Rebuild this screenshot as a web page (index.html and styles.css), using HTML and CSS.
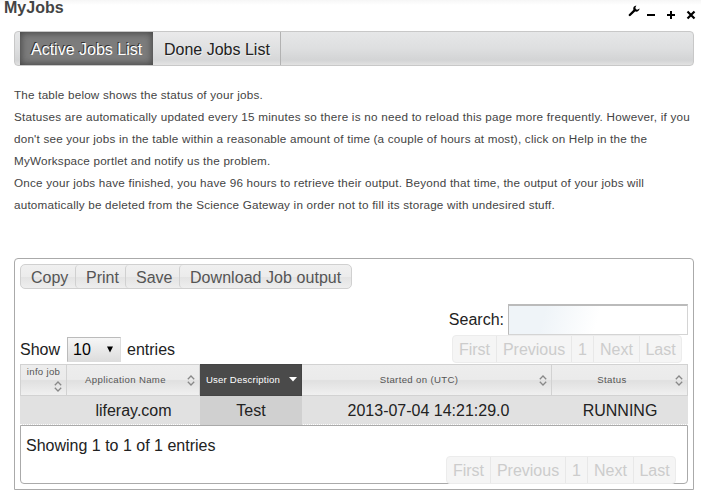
FILE: index.html
```html
<!DOCTYPE html>
<html lang="en">
<head>
<meta charset="utf-8">
<title>MyJobs</title>
<link rel="stylesheet" href="styles.css">
</head>
<body>
<header class="topbar">
  <h1>MyJobs</h1>
  <div class="tools">
    <svg class="wrench" width="12" height="12" viewBox="0 0 12 12"><path d="M1.8 10 6.8 5.2" stroke="#000" stroke-width="2.4" stroke-linecap="round"/><path d="M8.4.4C6 .6 4.9 2.3 5.3 4.4l2.2 2.2c2.1.3 4-1 4.1-3.2L9.4 4.8 7.8 4.3 7.4 2.6Z" fill="#000"/></svg>
    <svg width="10" height="10" viewBox="0 0 10 10"><path d="M1 5h8" stroke="#000" stroke-width="2"/></svg>
    <svg width="10" height="10" viewBox="0 0 10 10"><path d="M1 5h8M5 1v8" stroke="#000" stroke-width="2"/></svg>
    <svg width="10" height="10" viewBox="0 0 10 10"><path d="m1.5 1.5 7 7m0-7-7 7" stroke="#000" stroke-width="2.2"/></svg>
  </div>
</header>
<nav class="tabs">
  <a class="tab active">Active Jobs List</a>
  <a class="tab">Done Jobs List</a>
</nav>
<div class="intro">
  <div>The table below shows the status of your jobs.</div>
  <div class="wide">Statuses are automatically updated every 15 minutes so there is no need to reload this page more frequently. However, if you</div>
  <div>don't see your jobs in the table within a reasonable amount of time (a couple of hours at most), click on Help in the the</div>
  <div>MyWorkspace portlet and notify us the problem.</div>
  <div>Once your jobs have finished, you have 96 hours to retrieve their output. Beyond that time, the output of your jobs will</div>
  <div>automatically be deleted from the Science Gateway in order not to fill its storage with undesired stuff.</div>
</div>
<main class="panel">
  <div class="buttons">
    <span class="copy">Copy</span><span class="print">Print</span><span class="save">Save</span><span class="download">Download Job output</span>
  </div>
  <div class="controls">
    <div class="length">Show <span class="select">10<svg width="8" height="7" viewBox="0 0 8 7"><path d="M1 .5h6L4 6.5Z"/></svg></span> entries</div>
    <div class="right">
      <div class="search">Search:<span class="field"></span></div>
      <div class="pager"><span>First</span><span>Previous</span><span>1</span><span>Next</span><span>Last</span></div>
    </div>
  </div>
  <div class="grid head">
    <div class="info"><span>info job</span><svg class="sort" width="8" height="11" viewBox="0 0 8 11"><path d="M.8 4.2 4 1l3.2 3.2M.8 6.8 4 10l3.2-3.2"/></svg></div>
    <div><span>Application Name</span><svg class="sort" width="8" height="11" viewBox="0 0 8 11"><path d="M.8 4.2 4 1l3.2 3.2M.8 6.8 4 10l3.2-3.2"/></svg></div>
    <div class="sorted"><span>User Description</span><svg width="8" height="5" viewBox="0 0 8 5"><path d="M0 0h8L4 4.5Z" fill="#fff"/></svg></div>
    <div><span>Started on (UTC)</span><svg class="sort" width="8" height="11" viewBox="0 0 8 11"><path d="M.8 4.2 4 1l3.2 3.2M.8 6.8 4 10l3.2-3.2"/></svg></div>
    <div class="last"><span>Status</span><svg class="sort" width="8" height="11" viewBox="0 0 8 11"><path d="M.8 4.2 4 1l3.2 3.2M.8 6.8 4 10l3.2-3.2"/></svg></div>
  </div>
  <div class="grid row"><div></div><div>liferay.com</div><div class="hl">Test</div><div class="date">2013-07-04 14:21:29.0</div><div>RUNNING</div></div>
  <footer class="foot">
    <div class="summary">Showing 1 to 1 of 1 entries</div>
    <div class="pager"><span>First</span><span>Previous</span><span>1</span><span>Next</span><span>Last</span></div>
  </footer>
</main>
</body>
</html>
```
FILE: styles.css
```css
* { box-sizing: border-box; }
body { margin: 0; height: 504px; overflow: hidden; background: linear-gradient(#f6f6f6, #fff 5px) no-repeat #fff; color: #222; font: 16px/20px "Liberation Sans", Arial, sans-serif; }
svg { display: block; fill: none; flex: none; }
.topbar { height: 31px; padding: 0 5px 0 4px; display: flex; justify-content: space-between; }
h1 { margin: 0; font-size: 16px; line-height: 16px; color: #444; }
.tools { display: flex; gap: 10px; padding-top: 10px; }
.wrench { margin: -5px -4px 0 0; }
.tabs { height: 35px; margin: 0 7px 0 14px; padding-left: 5px; display: flex; border: 1px solid #c8c8c8; border-radius: 4px; background: linear-gradient(#e6e7e8, #dedfe0 50%, #d3d4d5 85%, #e2e2e2); }
.tab { line-height: 35px; width: 128px; padding-left: 11px; border-right: 1px solid #b2b2b2; white-space: nowrap; text-shadow: 1px 1px #eee; background: linear-gradient(#eaeaeb, #dddedf 60%, #d6d7d8 85%, #e4e4e4); }
.tab.active { width: 133px; border: 0; color: #fff; background: #7c7c7c; box-shadow: inset 0 0 7px 1px #444; text-shadow: -1px -1px #333; }
.intro { margin: 18px 0 0 14px; height: 174px; font-size: 11.7px; line-height: 22px; letter-spacing: 0.2px; color: #444; white-space: nowrap; }
.intro .wide { letter-spacing: 0.235px; }
.panel { width: 680px; height: 232px; margin-left: 14px; border: 1px solid #aaa; border-radius: 4px 4px 0 0; padding: 5px; }
.buttons { display: flex; height: 25px; width: 332px; border: 1px solid #d0d0d0; border-radius: 5px; background: linear-gradient(#f0f0f0, #ececec 50%, #e3e3e3 52%, #eee); color: #555; line-height: 25px; }
.buttons span { padding-left: 10px; border-left: 1px solid #d0d0d0; border-radius: 4px 0 0 4px; white-space: nowrap; }
.buttons .copy { width: 54px; border: 0; }
.print { width: 50px; }
.save { width: 54px; }
.download { flex: 1; letter-spacing: 0.05px; }
.controls { height: 75px; padding-top: 15px; display: flex; justify-content: space-between; }
.length { display: flex; align-items: center; height: 30px; margin-top: 31px; }
.select { width: 54px; height: 25px; margin: -2px 6px 0 7px; padding: 2px 6px 0 5px; display: flex; align-items: center; justify-content: space-between; background: linear-gradient(#f6f6f6, #ddd); border: 1px solid #bbb; border-right-color: #ddd; border-bottom-color: #ddd; color: #000; }
.select svg { fill: #000; margin-top: -2px; }
.search { display: flex; align-items: center; justify-content: flex-end; height: 31px; }
.field { width: 180px; height: 31px; margin-left: 4px; border: 1px solid #d4d4d4; border-top: 2px solid #bbb; border-left-color: #bbb; background: linear-gradient(105deg, #eff4f8 20%, #fff 50%); }
.pager { display: flex; height: 28px; width: 230px; margin-left: auto; margin-right: 6px; line-height: 28px; color: #ccc; background: #f5f5f5; border: 1px solid #ececec; border-radius: 4px; }
.pager span { width: 44px; text-align: center; border-right: 1px solid #e8e8e8; }
.pager span:nth-child(2) { width: 75px; }
.pager span:nth-child(3) { width: 22px; }
.pager span:nth-child(4) { width: 46px; }
.pager span:nth-child(5) { flex: 1; border: 0; }
.grid { display: grid; grid-template-columns: 47px 133px 102px 250px 136px; }
.head { height: 32px; font-size: 9.6px; line-height: 12px; letter-spacing: 0.35px; color: #555; }
.head div { display: flex; align-items: center; padding: 0 4px 1px 0; border: 1px solid #d2d2d2; border-left: 0; background: linear-gradient(#ededed, #ebebeb 48%, #e0e0e0 52%, #f0f0f0); white-space: nowrap; }
.head span { flex: 1; text-align: center; padding-right: 3px; }
.head .info { flex-direction: column; align-items: center; padding: 1px 4px 3px; border-left: 1px solid #d2d2d2; letter-spacing: 0.3px; }
.head .info span { flex: none; padding-right: 0; }
.info svg { align-self: flex-end; margin-top: 3px; }
.sort { stroke: #888; stroke-width: 1.3; margin-top: 1px; }
.head .sorted { background: #4a4a4a; color: #fff; border-color: #444; letter-spacing: 0.2px; }
.row { height: 29px; line-height: 29px; text-align: center; background: #e1e1e1; border-bottom: 1px dotted #fff; }
.hl { background: #d0d0d0; }
.date { padding-left: 3px; }
.foot { height: 59px; border: 1px solid #aaa; border-radius: 0 0 4px 4px; padding: 10px 5px 0; }
```
